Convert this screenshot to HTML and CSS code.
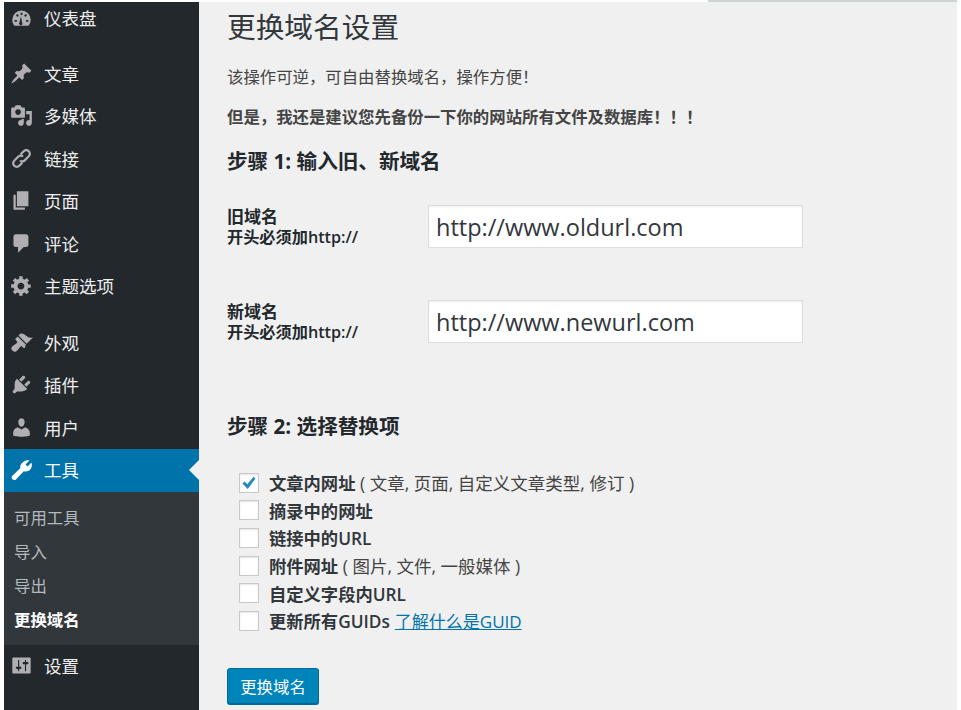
FILE: index.html
```html
<!DOCTYPE html>
<html lang="zh-CN">
<head>
<meta charset="utf-8">
<title>更换域名设置</title>
<link rel="stylesheet" href="styles.css">
</head>
<body>
<div class="topline"></div>
<div class="shell">
  <nav class="side">
    <a class="item first"><svg class="ic" viewBox="0 0 20 20"><path d="M10 3a8 8 0 0 0-8 8c0 2 .7 3.800 1.900 5.200h12.200A8 8 0 0 0 18 11a8 8 0 0 0-8-8zm-.8 2h1.600v2H9.200zM5.200 7l1.400-1 1.100 1.700-1.300 1zm9.600 0-1.200 1.700-1.300-1 1.100-1.700zM4 11.300h2v1.500H4zm10 0h2v1.500h-2zm-3.300 2.300a1.500 1.500 0 1 1-2.400-.3L9.500 8l1 5.300z" fill-rule="evenodd"/></svg><span>仪表盘</span></a>
    <a class="item sep"><svg class="ic" viewBox="0 0 20 20"><path d="M10.440 3.020l1.820-1.820 6.360 6.350-1.830 1.820c-1.050-.68-2.480-.57-3.410.36l-.75.75c-.92.930-1.040 2.350-.35 3.410l-1.830 1.820-2.410-2.410-2.800 2.790c-.42.420-3.380 2.710-3.800 2.290s1.860-3.390 2.280-3.810l2.790-2.790L4.100 9.360l1.830-1.820c1.050.69 2.480.57 3.400-.36l.75-.75c.93-.92 1.050-2.350.36-3.410z"/></svg><span>文章</span></a>
    <a class="item"><svg class="ic" viewBox="0 0 20 20"><path d="M13 11V4c0-.55-.45-1-1-1h-1.670L9 1H5L3.670 3H2c-.55 0-1 .45-1 1v7c0 .55.45 1 1 1h10c.55 0 1-.45 1-1zM7 4.500c1.380 0 2.500 1.120 2.500 2.500S8.380 9.500 7 9.500 4.500 8.380 4.500 7 5.620 4.500 7 4.500zM14 6h5v10.500c0 1.380-1.120 2.500-2.500 2.500S14 17.880 14 16.500s1.120-2.500 2.500-2.500c.17 0 .34.020.5.050V9h-3V6zm-4 8.050V13h2v3.500c0 1.380-1.120 2.500-2.500 2.500S7 17.880 7 16.500 8.120 14 9.500 14c.17 0 .34.020.5.050z"/></svg><span>多媒体</span></a>
    <a class="item"><svg class="ic" viewBox="0 0 20 20"><path d="M17 3c-1.800-1.800-4.300-1.500-6 .2L8.600 5.600l1.400 1.300 2.400-2.300c1-1 2.200-1.100 3.200-.2s.8 2.200-.1 3.200l-3.100 3.100c-1 1-2.200 1-3 .3L8 12.400c1.600 1.500 4 1.400 5.700-.3l3.100-3.100C18.500 7.300 18.800 4.800 17 3zM3 17c1.800 1.800 4.300 1.500 6-.2l2.400-2.400-1.400-1.300-2.400 2.300c-1 1-2.200 1.100-3.200.2s-.8-2.200.1-3.200l3.100-3.100c1-1 2.200-1 3-.3L12 7.600c-1.600-1.500-4-1.400-5.700.3L3.200 11C1.500 12.700 1.200 15.200 3 17z"/></svg><span>链接</span></a>
    <a class="item"><svg class="ic" viewBox="0 0 20 20"><path d="M6 15V2h10v13H6zm-1 1h8v2H3V5h2v11z"/></svg><span>页面</span></a>
    <a class="item"><svg class="ic" viewBox="0 0 20 20"><path d="M5 2h9c1.100 0 2 .9 2 2v7c0 1.100-.9 2-2 2h-2l-5 5v-5H5c-1.100 0-2-.9-2-2V4c0-1.100.9-2 2-2z"/></svg><span>评论</span></a>
    <a class="item"><svg class="ic" viewBox="0 0 20 20"><path d="M18 12h-2.180c-.17.7-.44 1.350-.81 1.930l1.540 1.540-2.100 2.100-1.540-1.540c-.58.36-1.230.640-1.910.810V19H8v-2.180c-.68-.17-1.330-.45-1.910-.81l-1.540 1.540-2.120-2.120 1.540-1.540c-.36-.58-.64-1.230-.81-1.910H1V9.020h2.170c.17-.7.44-1.340.81-1.920L2.430 5.550l2.100-2.100 1.550 1.550c.58-.37 1.240-.64 1.930-.81V2h3v2.180c.68.17 1.330.45 1.910.81l1.540-1.540 2.120 2.120-1.540 1.540c.36.590.64 1.240.81 1.920H18V12zm-8.500 1.500c1.660 0 3-1.340 3-3s-1.340-3-3-3-3 1.340-3 3 1.340 3 3 3z" fill-rule="evenodd"/></svg><span>主题选项</span></a>
    <a class="item sep2"><svg class="ic" viewBox="0 0 20 20"><path d="M14.480 11.060L7.410 3.990l1.500-1.500c.5-.56 2.300-.47 3.510.32 1.210.8 1.430 1.280 2.910 2.100 1.180.64 2.450 1.260 4.670.85zm-.71.71L6.700 4.700 4.930 6.470c-.39.39-.39 1.020 0 1.410l1.060 1.060c.39.39.39 1.030 0 1.420-.6.600-1.430 1.110-2.210 1.690-.35.260-.7.530-1.010.84C1.430 13.730.43 15.180 2 16.900c.13.130.26.260.4.360 1.610 1.560 3.080.55 4.150-.51.3-.31.58-.66.84-1.010.58-.78 1.090-1.610 1.690-2.210.39-.39 1.020-.39 1.410 0l1.060 1.060c.39.39 1.020.39 1.410 0z"/></svg><span>外观</span></a>
    <a class="item"><svg class="ic" viewBox="0 0 20 20"><path d="M13.110 4.360L9.870 7.600 8 5.730l3.240-3.240c.35-.34 1.050-.2 1.560.32.52.51.66 1.210.31 1.550zm-8 1.770l.91-1.120 9.010 9.010-1.190.84c-.71.71-2.630 1.160-3.820 1.160H6.140L4.900 17.260c-.59.59-1.540.59-2.120 0-.59-.58-.59-1.530 0-2.120l1.240-1.240v-3.880c0-1.130.4-3.050 1.090-3.890zm7.260 3.970l3.240-3.240c.34-.35 1.040-.21 1.550.31.52.51.66 1.210.31 1.550l-3.240 3.250z"/></svg><span>插件</span></a>
    <a class="item"><svg class="ic" viewBox="0 0 20 20"><path d="M10 9.250c-2.270 0-2.730-3.440-2.730-3.440C7 4.020 7.820 2 9.970 2c2.160 0 2.980 2.020 2.710 3.810 0 0-.41 3.440-2.680 3.440zm0 2.570L12.720 10c2.390 0 4.520 2.330 4.520 4.530v2.490s-3.650 1.130-7.240 1.130c-3.650 0-7.240-1.130-7.240-1.130v-2.490c0-2.250 1.940-4.480 4.380-4.480z"/></svg><span>用户</span></a>
    <a class="item current"><svg class="ic" viewBox="0 0 20 20"><path d="M19 5.500c0 3-2.400 5.400-5.400 5.400-.6 0-1.100-.1-1.600-.3l-6.600 7c-1 1-2.400 1-3.300.1s-.9-2.300 0-3.200l7-6.700c-.2-.5-.3-1-.3-1.600C9.800 3.700 12.300 1 15.200 1c.6 0 1.200.1 1.700.3l-3.400 3.400 1.800 1.800 3.400-3.400c.2.800.3 1.600.3 2.400z"/></svg><span>工具</span></a>
    <div class="sub">
      <a>可用工具</a>
      <a>导入</a>
      <a>导出</a>
      <a class="on">更换域名</a>
    </div>
    <a class="item"><svg class="ic" viewBox="0 0 20 20"><path d="M18 16V4c0-.55-.45-1-1-1H3c-.55 0-1 .45-1 1v12c0 .55.45 1 1 1h14c.55 0 1-.45 1-1zM8 11h1c.55 0 1 .45 1 1s-.45 1-1 1H8v1.500c0 .28-.22.5-.5.5s-.5-.22-.5-.5V13H6c-.55 0-1-.45-1-1s.45-1 1-1h1V5.500c0-.28.22-.5.5-.5s.5.22.5.5V11zm5-2h-1c-.55 0-1-.45-1-1s.45-1 1-1h1V5.500c0-.28.22-.5.5-.5s.5.22.5.5V7h1c.55 0 1 .45 1 1s-.45 1-1 1h-1v5.500c0 .28-.22.5-.5.5s-.5-.22-.5-.5V9z"/></svg><span>设置</span></a>
  </nav>
  <main class="main">
    <h1>更换域名设置</h1>
    <p class="lead">该操作可逆，可自由替换域名，操作方便！</p>
    <p class="warn">但是，我还是建议您先备份一下你的网站所有文件及数据库！！！</p>
    <h2>步骤 1: 输入旧、新域名</h2>
    <div class="field">
      <label class="flabel"><span class="fname">旧域名</span><span class="fhint">开头必须加http://</span></label>
      <input class="url" type="text" value="http://www.oldurl.com">
    </div>
    <div class="field">
      <label class="flabel"><span class="fname">新域名</span><span class="fhint">开头必须加http://</span></label>
      <input class="url" type="text" value="http://www.newurl.com">
    </div>
    <h2 class="step2">步骤 2: 选择替换项</h2>
    <ul class="checks">
      <li><span class="box"><svg viewBox="0 0 16 16"><path d="M1.500 8.500 3.500 6.600 6.300 9.300 12.500 1.800 14.500 3.400 6.700 14z"/></svg></span><b>文章内网址</b><span class="note"> ( 文章, 页面, 自定义文章类型, 修订 )</span></li>
      <li><span class="box"></span><b>摘录中的网址</b></li>
      <li><span class="box"></span><b>链接中的URL</b></li>
      <li><span class="box"></span><b>附件网址</b><span class="note"> ( 图片, 文件, 一般媒体 )</span></li>
      <li><span class="box"></span><b>自定义字段内URL</b></li>
      <li><span class="box"></span><b>更新所有GUIDs</b><a class="link">了解什么是GUID</a></li>
    </ul>
    <button class="btn" type="button">更换域名</button>
  </main>
</div>
</body>
</html>
```
FILE: styles.css
```css
html, body { margin: 0; padding: 0; background: #fff; height: 100%; overflow: hidden; }
body { font-family: "Open Sans", "Noto Sans CJK SC", sans-serif; color: #444; position: relative; }
.topline { position: absolute; left: 708px; top: 0; width: 249px; height: 2px; background: #ced4d0; z-index: 2; }
.shell { display: flex; height: 708px; margin: 2px 4px 0; }
.side { width: 195px; flex: none; background: #23282d; color: #eee; display: flex; flex-direction: column; box-sizing: border-box; }
.item { display: flex; align-items: center; height: 42.500px; padding-left: 6px; font-size: 17.500px; line-height: 1; color: #eee; font-family: "Noto Sans CJK SC", sans-serif; flex: none; }
.item.first { height: 32px; }
.item.sep { margin-top: 18px; }
.item.sep2 { margin-top: 14px; }
.item span { margin-left: 11px; }
.ic { width: 23px; height: 23px; fill: #aeaeb3; flex: none; }
.item.current { background: #0073aa; color: #fff; position: relative; height: 43px; }
.item.current .ic { fill: #fff; }
.item.current::after { content: ""; position: absolute; right: 0; top: 50%; margin-top: -10px; border: 10px solid transparent; border-right-color: #f1f1f1; border-left-width: 0; }
.sub { background: #32373c; display: flex; flex-direction: column; padding: 8px 0 9px; flex: none; }
.sub a { height: 34px; display: flex; align-items: center; padding-left: 10px; font-size: 16.400px; color: #b4b9be; font-family: "Noto Sans CJK SC", sans-serif; }
.sub a.on { color: #fff; font-weight: 700; }
.main { flex: 1; background: #f0f0f0; padding: 0 0 0 28px; min-width: 0; }
h1 { font-size: 28.700px; font-weight: 400; color: #32373c; margin: 6px 0 0; line-height: 36px; font-family: "Noto Sans CJK SC", sans-serif; }
.lead { margin: 21px 0 0; font-size: 16.400px; line-height: 22px; font-family: "Noto Sans CJK SC", sans-serif; }
.warn { margin: 18px 0 0; font-size: 16.400px; line-height: 22px; font-weight: 700; font-family: "Noto Sans CJK SC", sans-serif; }
h2 { font-size: 20.600px; font-weight: 700; color: #23282d; margin: 21px 0 0; line-height: 26px; font-family: "Open Sans", "Noto Sans CJK SC", sans-serif; }
.field { display: flex; align-items: flex-start; height: 95px; }
h2 + .field { margin-top: 31px; }
.flabel { width: 201px; flex: none; font-weight: 600; color: #23282d; margin-top: 1px; display: flex; flex-direction: column; line-height: 21px; }
.fname { font-size: 17px; font-weight: 700; }
.fhint { font-size: 16.200px; }
.url { width: 375px; height: 43px; box-sizing: border-box; border: 1px solid #ddd; background: #fff; box-shadow: inset 0 1px 2px rgba(0,0,0,.07); padding: 0 7px; font: 400 23.500px "Open Sans", sans-serif; color: #32373c; margin: 0; outline: 0; }
h2.step2 { margin-top: 18px; }
.checks { list-style: none; margin: 30px 0 0; padding: 0 0 0 12px; }
.checks li { display: flex; align-items: center; height: 27.600px; font-size: 17.300px; white-space: pre; }
.checks b { color: #32373c; font-weight: 600; }
.note { color: #444; font-size: 17.500px; }
.box { width: 20px; height: 20px; box-sizing: border-box; border: 1px solid #c8c8c8; background: #fff; margin-right: 10px; display: flex; align-items: center; justify-content: center; flex: none; box-shadow: inset 0 1px 2px rgba(0,0,0,.1); }
.box svg { width: 16px; height: 16px; fill: #1e8cbe; }
.link { color: #0073aa; text-decoration: underline; font-size: 17px; margin-left: 5px; }
.btn { display: block; margin-top: 33px; width: 92px; height: 36px; background: #0085ba; border: 1px solid #006799; border-radius: 3px; color: #fff; font: 400 16.400px "Noto Sans CJK SC", sans-serif; padding: 0; box-shadow: 0 1px 0 #006799; }
```
